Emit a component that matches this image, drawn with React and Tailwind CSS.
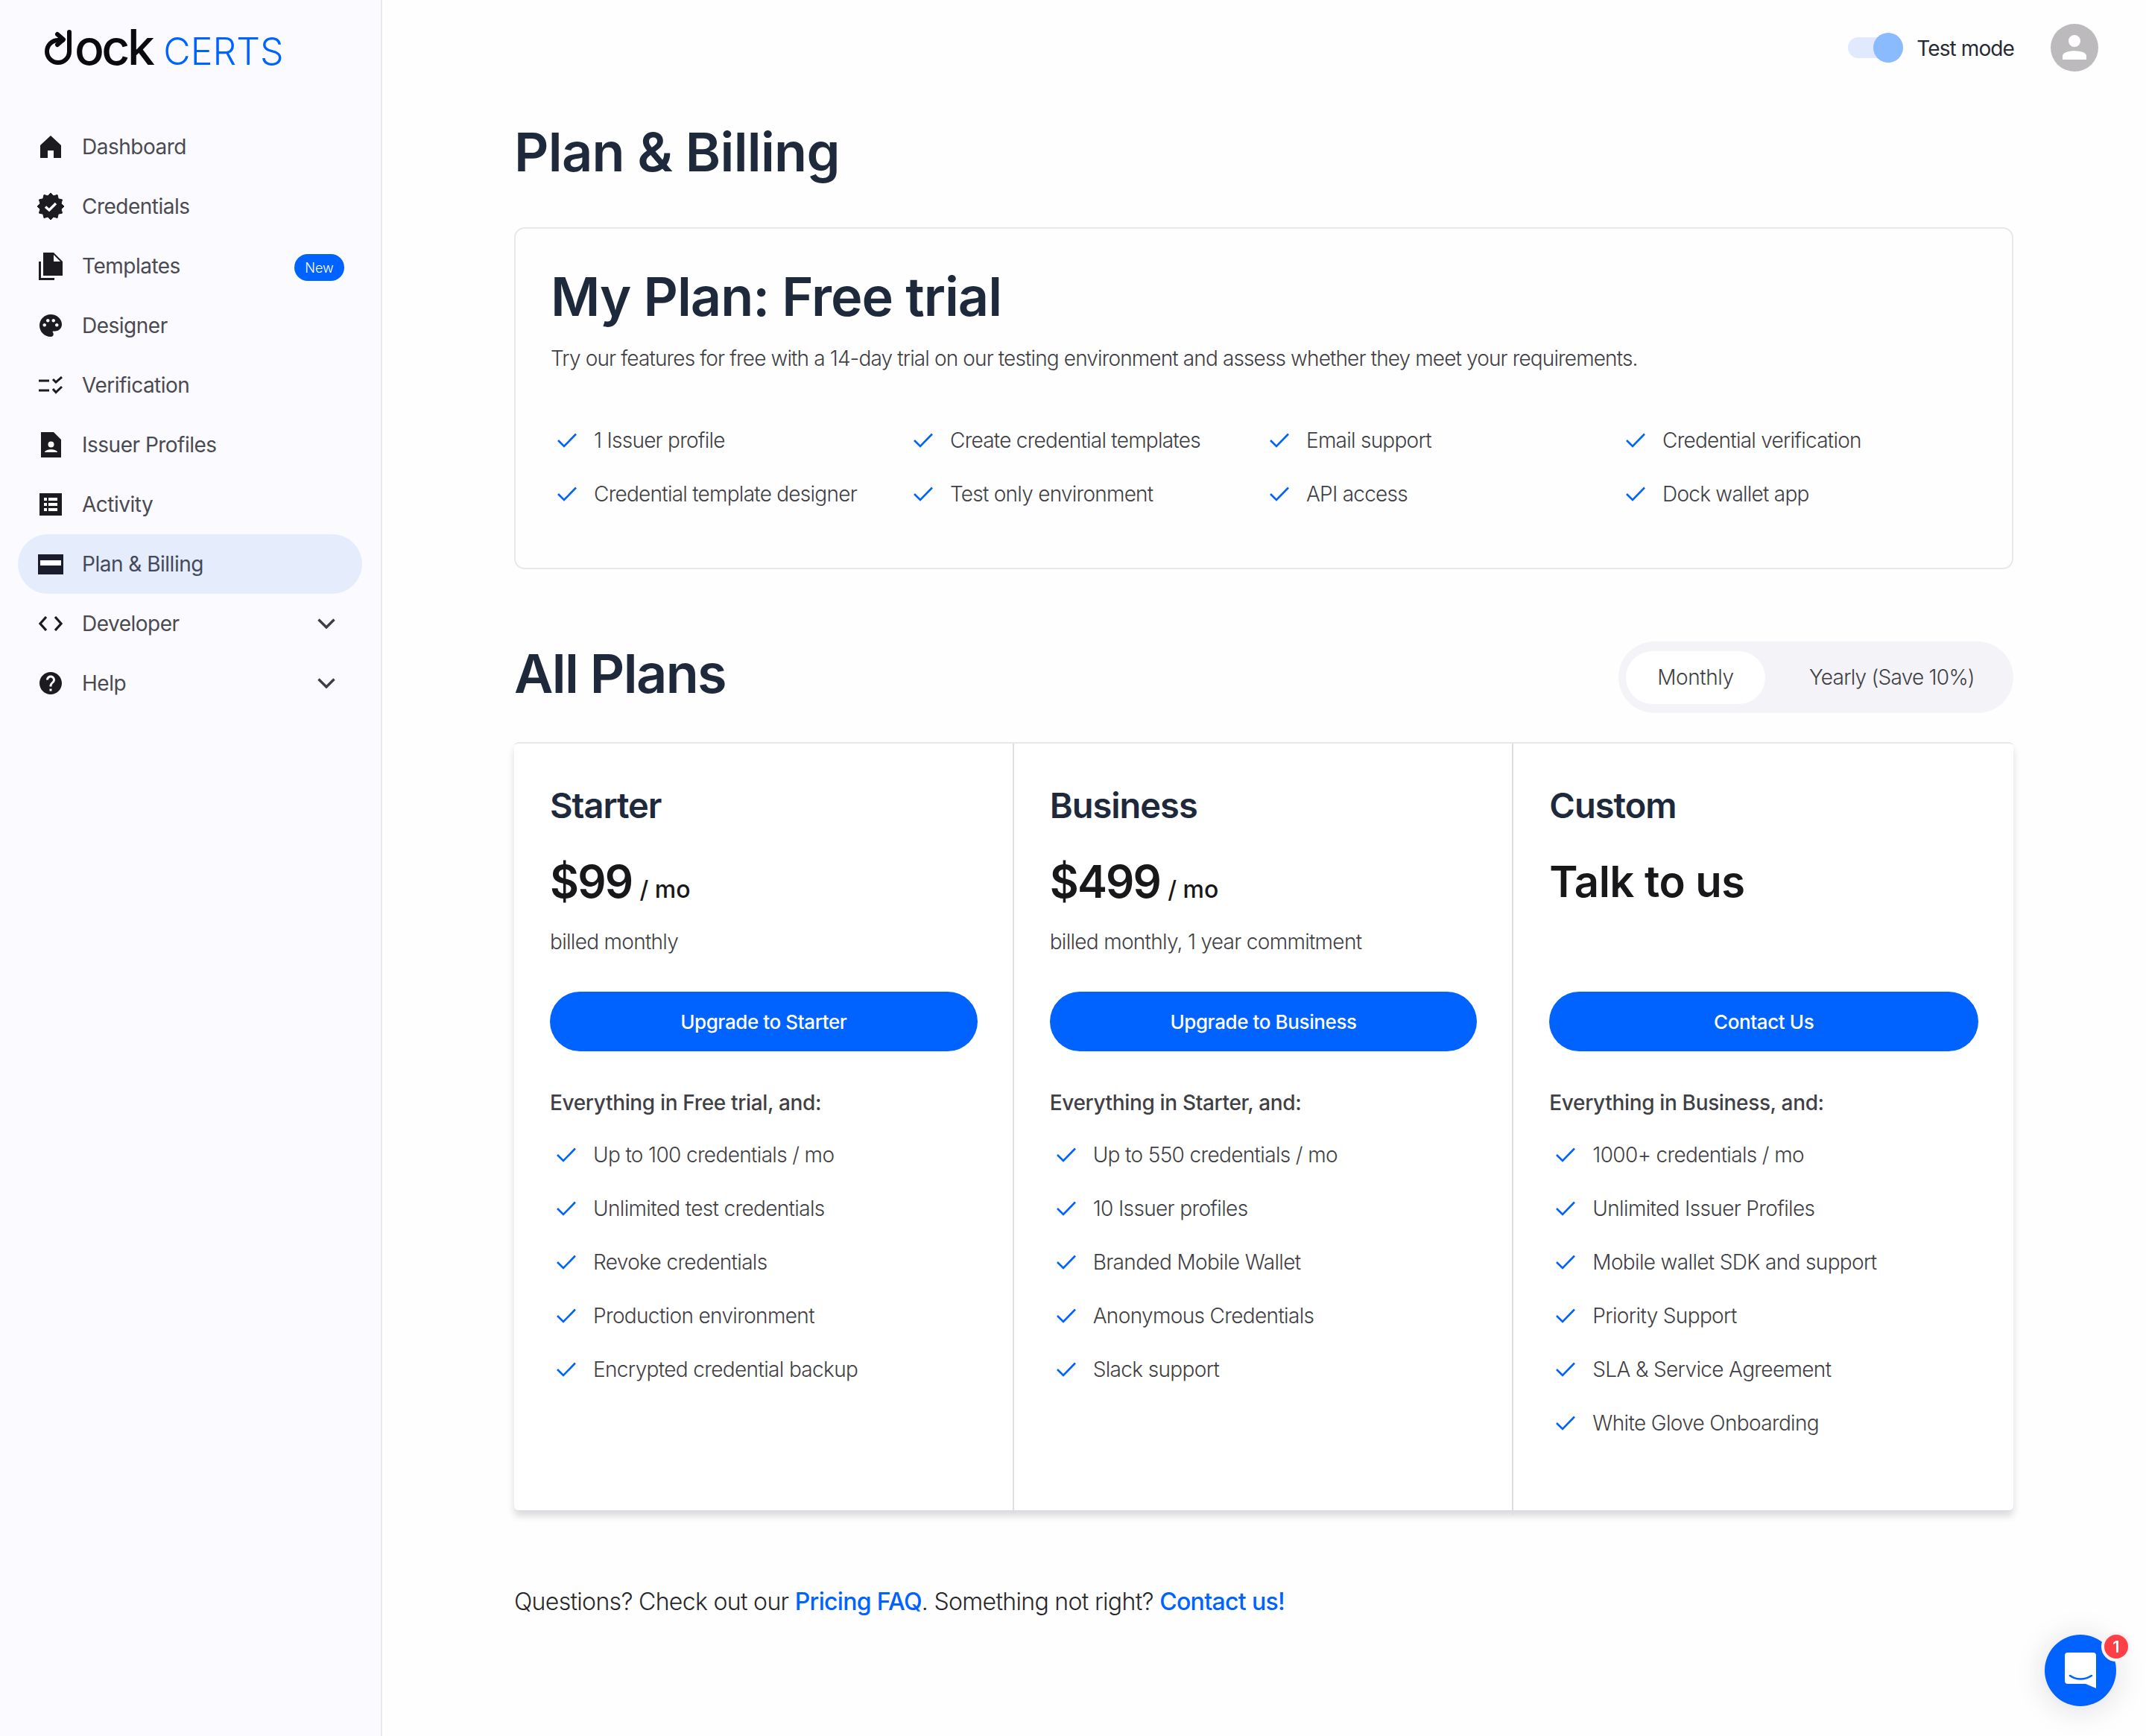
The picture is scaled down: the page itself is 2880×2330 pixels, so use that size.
import React from 'react';
import { MdPalette, MdHelp } from 'react-icons/md';

const badgePoints = Array.from({ length: 24 }, (_, i) => {
  const r = i % 2 === 0 ? 18 : 14.5;
  const a = (i * Math.PI) / 12;
  return `${(18 + r * Math.sin(a)).toFixed(2)},${(18 - r * Math.cos(a)).toFixed(2)}`;
}).join(' ');

const HomeIcon = () => (
  <svg width="28" height="30" viewBox="0 0 28 30">
    <path d="M14 0 L28 13 V30 H18 V20 H10 V30 H0 V13 Z" fill="#1c1b1f" />
  </svg>
);
const BadgeIcon = () => (
  <svg width="36" height="36" viewBox="0 0 36 36">
    <polygon points={badgePoints} fill="#1c1b1f" stroke="#1c1b1f" strokeWidth="1" strokeLinejoin="round" />
    <path d="M11 18.5 L16 23 L25 14" fill="none" stroke="#fff" strokeWidth="3.4" />
  </svg>
);
const TemplatesIcon = () => (
  <svg width="32" height="37" viewBox="0 0 32 37">
    <path d="M6 0 H20 L32 12 V31 H6 Z" fill="#1c1b1f" />
    <path d="M20 3 L29 12 H20 Z" fill="#fbfaff" />
    <path d="M0 12 H3 V34 H21 V37 H0 Z" fill="#1c1b1f" />
  </svg>
);
const VerificationIcon = () => (
  <svg width="32" height="24" viewBox="0 0 32 24" fill="none" stroke="#1c1b1f" strokeWidth="3">
    <path d="M0 6 H14 M0 19 H14" />
    <path d="M19 4 L23 8 L31 1 M19 17 L23 21.5 L31 14" />
  </svg>
);
const IssuerIcon = () => (
  <svg width="27" height="34" viewBox="0 0 27 34">
    <path d="M0 0 H17 L27 10 V34 H0 Z" fill="#1c1b1f" />
    <circle cx="13.5" cy="16.5" r="4" fill="#fff" />
    <path d="M5 27 C6 22 21 22 22 27 Z" fill="#fff" />
  </svg>
);
const ActivityIcon = () => (
  <svg width="30" height="30" viewBox="0 0 30 30">
    <rect width="30" height="30" fill="#1c1b1f" />
    <path d="M6 6 H10 V10 H6 Z M6 13 H10 V17 H6 Z M6 20 H10 V24 H6 Z M12 6 H24 V10 H12 Z M12 13 H24 V17 H12 Z M12 20 H24 V24 H12 Z" fill="#fff" />
  </svg>
);
const CardIcon = () => (
  <svg width="34" height="27" viewBox="0 0 34 27">
    <rect width="34" height="27" fill="#1b1d2c" />
    <rect x="3" y="8" width="28" height="7" fill="#fff" />
  </svg>
);
const CodeIcon = () => (
  <svg width="32" height="20" viewBox="0 0 32 20" fill="none" stroke="#1c1b1f" strokeWidth="3.2">
    <path d="M10 1 L2 10 L10 19 M22 1 L30 10 L22 19" />
  </svg>
);
const ChevronIcon = () => (
  <svg width="24" height="14" viewBox="0 0 24 14" fill="none" stroke="#3e3d45" strokeWidth="3.4">
    <path d="M1.5 1.5 L12 12 L22.5 1.5" />
  </svg>
);
const CheckIcon = () => (
  <svg width="26" height="20" viewBox="0 0 26 20" fill="none" stroke="#0063ff" strokeWidth="2.6" className="shrink-0">
    <path d="M1 10 L9 18 L25 1.5" />
  </svg>
);

const navItems = [
  { label: 'Dashboard', icon: <HomeIcon /> },
  { label: 'Credentials', icon: <BadgeIcon /> },
  { label: 'Templates', icon: <TemplatesIcon />, badge: true },
  { label: 'Designer', icon: <MdPalette size={40} color="#1c1b1f" /> },
  { label: 'Verification', icon: <VerificationIcon /> },
  { label: 'Issuer Profiles', icon: <IssuerIcon /> },
  { label: 'Activity', icon: <ActivityIcon /> },
  { label: 'Plan & Billing', icon: <CardIcon />, active: true },
  { label: 'Developer', icon: <CodeIcon />, chevron: true },
  { label: 'Help', icon: <MdHelp size={38} color="#1c1b1f" />, chevron: true },
];

const currentFeatures = [
  '1 Issuer profile',
  'Create credential templates',
  'Email support',
  'Credential verification',
  'Credential template designer',
  'Test only environment',
  'API access',
  'Dock wallet app',
];

const plans = [
  {
    name: 'Starter',
    price: '$99',
    billing: 'billed monthly',
    cta: 'Upgrade to Starter',
    intro: 'Everything in Free trial, and:',
    items: ['Up to 100 credentials / mo', 'Unlimited test credentials', 'Revoke credentials', 'Production environment', 'Encrypted credential backup'],
  },
  {
    name: 'Business',
    price: '$499',
    billing: 'billed monthly, 1 year commitment',
    cta: 'Upgrade to Business',
    intro: 'Everything in Starter, and:',
    items: ['Up to 550 credentials / mo', '10 Issuer profiles', 'Branded Mobile Wallet', 'Anonymous Credentials', 'Slack support'],
  },
  {
    name: 'Custom',
    cta: 'Contact Us',
    intro: 'Everything in Business, and:',
    items: ['1000+ credentials / mo', 'Unlimited Issuer Profiles', 'Mobile wallet SDK and support', 'Priority Support', 'SLA & Service Agreement', 'White Glove Onboarding'],
  },
];

const Sidebar = () => (
  <aside className="w-[513px] shrink-0 border-r-2 border-[#e9e8ee] bg-[#fbfaff]">
    <div className="flex h-[157px] items-baseline pl-[60px] pt-[33px] leading-[60px]">
      <svg width="38" height="47" viewBox="0 0 38 47" fill="none" stroke="#0b0b0f" strokeWidth="6" strokeLinecap="round" strokeLinejoin="round">
        <path d="M33 3 V29 A15 15 0 1 1 18 14 H24" />
        <path d="M17 6 L25 13 L17 20" />
      </svg>
      <span className="ml-[2px] text-[66px] font-medium tracking-[-3.5px] text-[#0b0b0f]">ock</span>
      <span className="ml-[15px] text-[50px] font-light text-[#0063ff]">CERTS</span>
    </div>
    <nav className="ml-[24px] mr-[25px] flex flex-col">
      {navItems.map(item => (
        <div key={item.label} className={`flex h-[80px] items-center rounded-full pl-[26px] ${item.active ? 'bg-[#e5ecfc]' : ''}`}>
          <span className="flex w-[36px] shrink-0 items-center justify-center">{item.icon}</span>
          <span className={`ml-[24px] text-[28px] tracking-[-0.5px] ${item.active ? 'text-[#44495c]' : 'text-[#4a4a52]'}`}>{item.label}</span>
          {item.badge && (
            <span className="ml-auto mr-[24px] mt-[4px] flex h-[36px] w-[67px] items-center justify-center rounded-full bg-[#0063ff] text-[18px] font-light text-white">New</span>
          )}
          {item.chevron && (
            <span className="ml-auto mr-[36px] flex"><ChevronIcon /></span>
          )}
        </div>
      ))}
    </nav>
  </aside>
);

const TopBar = () => (
  <header className="flex h-[128px] items-center justify-end pr-[64px]">
    <div className="relative h-[28px] w-[74px] rounded-full bg-[#e0e9fd]">
      <span className="absolute right-0 top-[-6px] h-[40px] w-[40px] rounded-full bg-[#8abbff]" />
    </div>
    <span className="ml-[18px] mt-[1px] text-[28px] tracking-[-0.9px] text-[#272a33]">Test mode</span>
    <div className="ml-[49px] flex h-[64px] w-[64px] items-center justify-center rounded-full bg-[#bcbabd]">
      <svg width="32" height="34" viewBox="0 0 32 34" fill="#fff">
        <circle cx="16" cy="8" r="8" />
        <path d="M0 33 V28 C0 19 32 19 32 28 V33 Z" />
      </svg>
    </div>
  </header>
);

const PlanColumn = ({ plan }) => (
  <div className="mb-[-6px] border-r-2 border-[#dedde2] pl-[48px] pr-[47px] last:border-r-0">
    <h3 className="mt-[53px] text-[47px] font-semibold leading-[60px] tracking-[-1px] text-[#1e293b]">{plan.name}</h3>
    {plan.price ? (
      <p className="mt-[32px] flex h-[80px] items-baseline text-[#18181b]">
        <span className="text-[60px] font-semibold leading-[80px] tracking-[-1.8px]">{plan.price}</span>
        <span className="ml-[10px] text-[32px] font-medium">/ mo</span>
      </p>
    ) : (
      <p className="mt-[32px] h-[80px] text-[58px] font-semibold leading-[80px] tracking-[-0.5px] text-[#18181b]">Talk to us</p>
    )}
    <p className="mt-[21px] h-[40px] text-[28px] font-light leading-[40px] tracking-[-0.7px] text-[#3f3f46]">{plan.billing}</p>
    <button className="mt-[47px] h-[80px] w-full rounded-full bg-[#0063ff] text-[26px] font-medium tracking-[-0.4px] text-white">{plan.cta}</button>
    <p className="mt-[49px] text-[28px] font-medium leading-[40px] tracking-[-0.35px] text-[#3f3f46]">{plan.intro}</p>
    <ul className="mt-[14px] pb-[50px]">
      {plan.items.map(item => (
        <li key={item} className="flex h-[72px] items-center pl-[9px]">
          <CheckIcon />
          <span className="ml-[23px] text-[28px] font-light tracking-[-0.65px] text-[#3f3f46]">{item}</span>
        </li>
      ))}
    </ul>
  </div>
);

const App = () => {
  return (
    <div className="relative flex min-h-[2330px] w-[2880px] bg-[#fefefe] font-[Inter,sans-serif]">
      <Sidebar />
      <main className="min-w-0 flex-1">
        <TopBar />
        <div className="pl-[177px] pr-[178px]">
          <h1 className="mt-[32px] text-[72px] font-semibold leading-[88px] tracking-[-0.7px] text-[#1e293b]">Plan &amp; Billing</h1>

          <section className="mt-[57px] h-[459px] rounded-[14px] border-2 border-[#e8e8ec] pl-[47px] pt-[51px]">
            <h2 className="text-[72px] font-semibold leading-[80px] tracking-[-1px] text-[#1e293b]">My Plan: Free trial</h2>
            <p className="mt-[23px] text-[28px] font-light leading-[40px] tracking-[-0.87px] text-[#3f3f46]">
              Try our features for free with a 14-day trial on our testing environment and assess whether they meet your requirements.
            </p>
            <div className="mt-[54px] grid grid-cols-[repeat(4,478px)]">
              {currentFeatures.map(feature => (
                <div key={feature} className="flex h-[72px] items-center pl-[9px]">
                  <CheckIcon />
                  <span className="ml-[23px] text-[28px] font-light tracking-[-0.75px] text-[#3f3f46]">{feature}</span>
                </div>
              ))}
            </div>
          </section>

          <div className="mt-[97px] flex h-[96px] items-center justify-between">
            <h2 className="mb-[10px] text-[72px] font-semibold leading-[80px] tracking-[-1.6px] text-[#1e293b]">All Plans</h2>
            <div className="flex h-[96px] w-[530px] items-center rounded-full bg-[#f4f3f7] pl-[10px]">
              <span className="flex h-[71px] w-[187px] items-center justify-center rounded-full bg-white text-[28px] font-light tracking-[-0.4px] text-[#3f3f46]">Monthly</span>
              <span className="ml-[59px] text-[28px] font-light tracking-[-0.75px] text-[#3f3f46]">Yearly (Save 10%)</span>
            </div>
          </div>

          <section className="mt-[39px] grid h-[1031px] grid-cols-3 rounded-[6px] border-t-2 border-[#e8e8ec] bg-white shadow-[0_8px_10px_rgba(40,40,60,0.16)]">
            {plans.map(plan => (
              <PlanColumn key={plan.name} plan={plan} />
            ))}
          </section>

          <p className="mt-[103px] text-[32px] font-light leading-[40px] tracking-[-0.68px] text-[#27272a]">
            Questions? Check out our <a className="font-medium text-[#0063ff]">Pricing FAQ</a>. Something not right? <a className="font-medium text-[#0063ff]">Contact us!</a>
          </p>
        </div>
      </main>

      <div className="fixed bottom-[40px] right-[40px] flex h-[96px] w-[96px] items-center justify-center rounded-full bg-[#0063ff] shadow-[0_4px_40px_rgba(30,30,60,0.15)]">
        <svg width="42" height="48" viewBox="0 0 42 48">
          <path d="M4 0 H38 A4 4 0 0 1 42 4 V48 L28 42 H4 A4 4 0 0 1 0 38 V4 A4 4 0 0 1 4 0 Z" fill="#fff" />
          <path d="M7 31 C15 37 27 37 36 31" fill="none" stroke="#0063ff" strokeWidth="2.6" strokeLinecap="round" />
        </svg>
        <span className="absolute right-[-20px] top-[-4px] flex h-[40px] w-[40px] items-center justify-center rounded-full border-[4px] border-[#fdf3f4] bg-[#ff3f46] text-[22px] font-semibold text-white">1</span>
      </div>
    </div>
  );
};

export default App;
